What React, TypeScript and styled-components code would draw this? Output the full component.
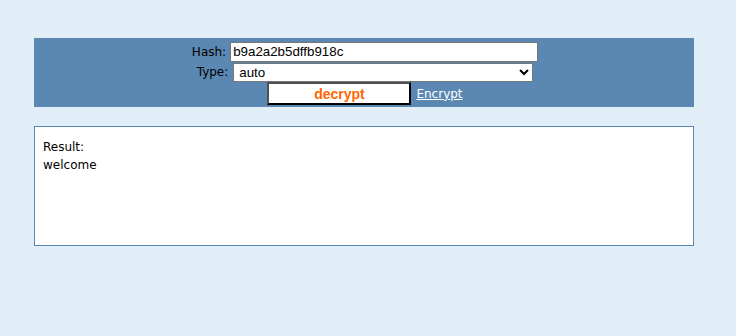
import styled, { createGlobalStyle } from "styled-components";

const GlobalStyle = createGlobalStyle`
  html, body {
    margin: 0;
    padding: 0;
    background: #e2eef7;
    font-family: "DejaVu Sans", Verdana, sans-serif;
    font-size: 12px;
  }
`;

const Page = styled.div`
  padding: 38px 0 0 34px;
  width: 660px;
`;

const Bar = styled.form`
  background: #5b87b3;
  height: 69px;
  padding: 3px 0 0 2px;
  box-sizing: border-box;
  display: flex;
  flex-direction: column;
  align-items: center;
`;

const Row = styled.div`
  display: flex;
  align-items: center;
  height: ${(p: { $h: number }) => p.$h}px;
`;

const Label = styled.label`
  color: #000;
  margin-right: ${(p: { $gap: number }) => p.$gap}px;
`;

const HashInput = styled.input`
  width: 308px;
  height: 20px;
  box-sizing: border-box;
  border: 1px solid #767676;
  padding: 0 2px;
  font-family: "Liberation Sans", Arial, sans-serif;
  font-size: 13.33px;
  color: #000;
  background: #fff;
  outline: none;
`;

const TypeSelect = styled.select`
  width: 300px;
  height: 19px;
  box-sizing: border-box;
  border: 1px solid #767676;
  font-family: "Liberation Sans", Arial, sans-serif;
  font-size: 13.33px;
  padding: 0 0 0 1px;
  background: #fff;
  color: #000;
`;

const DecryptButton = styled.button`
  width: 144px;
  height: 23px;
  box-sizing: border-box;
  background: #fff;
  border: 2px solid;
  border-color: #505050 #000 #000 #505050;
  color: #ff6600;
  font-family: "Liberation Sans", Arial, sans-serif;
  font-weight: bold;
  font-size: 14px;
  padding: 0;
  margin-right: 5px;
`;

const EncryptLink = styled.a`
  color: #fff;
  text-decoration: underline;
`;

const Result = styled.div`
  margin-top: 19px;
  height: 120px;
  box-sizing: border-box;
  background: #fff;
  border: 1px solid #5b87b3;
  padding: 11px 8px;
  color: #000;
  line-height: 18px;
`;

export default function App() {
  return (
    <>
      <GlobalStyle />
      <Page>
        <Bar onSubmit={(e) => e.preventDefault()}>
          <Row $h={21}>
            <Label $gap={4}>Hash:</Label>
            <HashInput defaultValue="b9a2a2b5dffb918c" />
          </Row>
          <Row $h={20}>
            <Label $gap={5}>Type:</Label>
            <TypeSelect defaultValue="auto">
              <option value="auto">auto</option>
              <option value="md5">md5</option>
              <option value="sha1">sha1</option>
            </TypeSelect>
          </Row>
          <Row $h={23}>
            <DecryptButton type="submit">decrypt</DecryptButton>
            <EncryptLink href="#">Encrypt</EncryptLink>
          </Row>
        </Bar>
        <Result>
          Result:
          <br />
          welcome
        </Result>
      </Page>
    </>
  );
}
